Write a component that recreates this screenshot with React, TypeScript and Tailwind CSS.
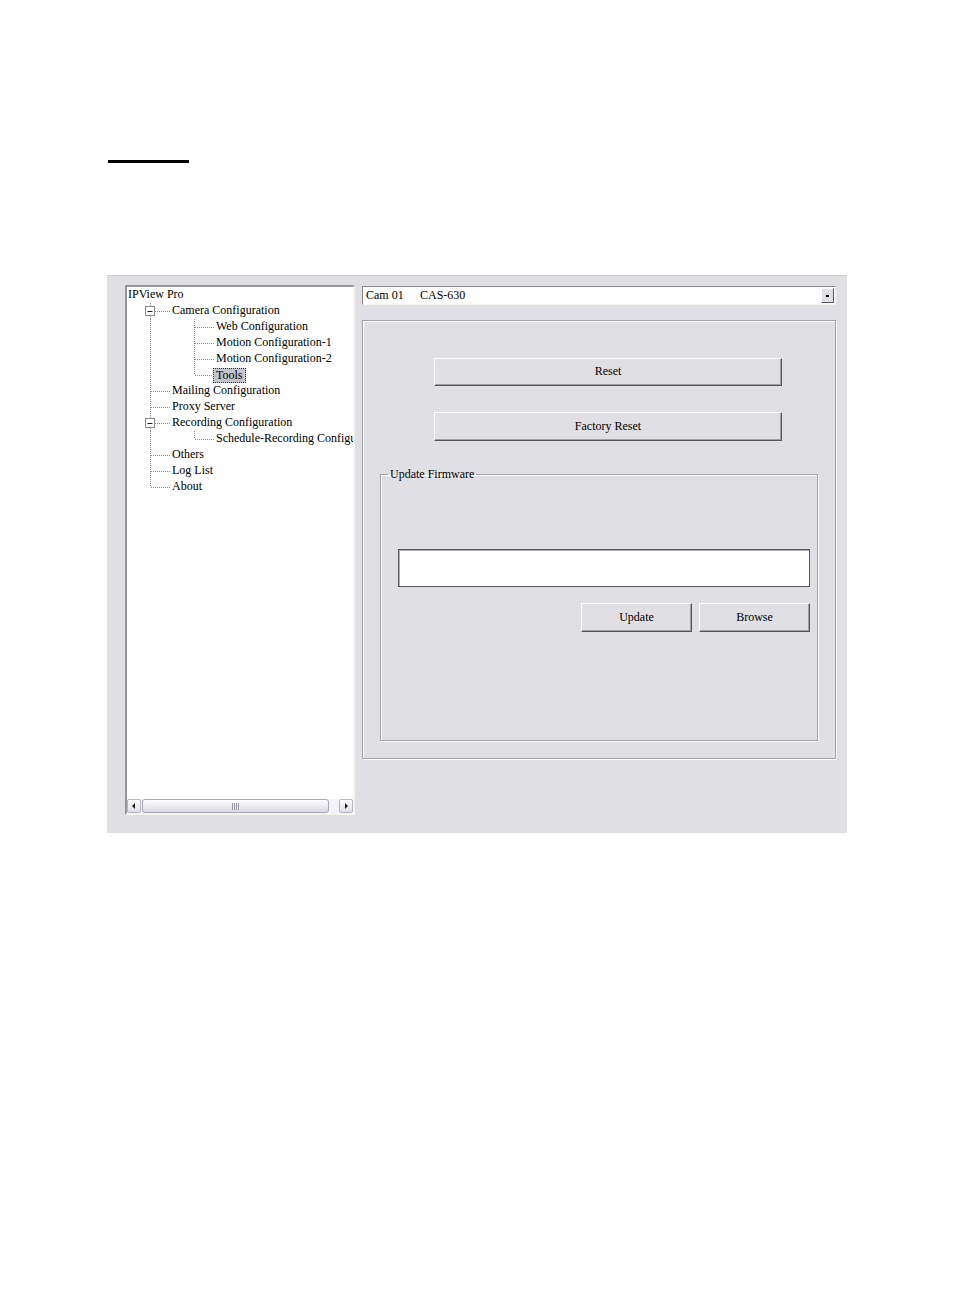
import React from "react";

type Kind =
  | "root"
  | "l1box"
  | "l1"
  | "l1last"
  | "l2"
  | "l2last";

const DOT = "#8c8c8c";

function VLine({ x, y1, y2 }: { x: number; y1: number; y2: number }) {
  return <line x1={x + 0.5} y1={y1} x2={x + 0.5} y2={y2} stroke={DOT} strokeDasharray="1 1" />;
}
function HLine({ x1, x2, y }: { x1: number; x2: number; y: number }) {
  return <line x1={x1} y1={y + 0.5} x2={x2} y2={y + 0.5} stroke={DOT} strokeDasharray="1 1" />;
}

function Prefix({ kind, l1Continues }: { kind: Kind; l1Continues: boolean }) {
  if (kind === "root") return <span className="inline-block w-[1px]" />;
  const isL2 = kind === "l2" || kind === "l2last";
  const width = isL2 ? 89 : 45;
  return (
    <svg width={width} height={16} className="shrink-0 block">
      {kind === "l1box" ? (
        <>
          <VLine x={23} y1={0} y2={3} />
          <VLine x={23} y1={13} y2={16} />
          <rect x={18.5} y={3.5} width={9} height={9} fill="#ffffff" stroke="#8c8c8c" />
          <line x1={20.5} y1={8.5} x2={25.5} y2={8.5} stroke="#1a1a1a" />
          <HLine x1={28} x2={44} y={8} />
        </>
      ) : kind === "l1" ? (
        <>
          <VLine x={23} y1={0} y2={16} />
          <HLine x1={24} x2={44} y={8} />
        </>
      ) : kind === "l1last" ? (
        <>
          <VLine x={23} y1={0} y2={8} />
          <HLine x1={24} x2={44} y={8} />
        </>
      ) : (
        <>
          {l1Continues && <VLine x={23} y1={0} y2={16} />}
          <VLine x={67} y1={0} y2={kind === "l2" ? 16 : 8} />
          <HLine x1={68} x2={88} y={8} />
        </>
      )}
    </svg>
  );
}

const rows: { text: string; kind: Kind; selected?: boolean }[] = [
  { text: "IPView Pro", kind: "root" },
  { text: "Camera Configuration", kind: "l1box" },
  { text: "Web Configuration", kind: "l2" },
  { text: "Motion Configuration-1", kind: "l2" },
  { text: "Motion Configuration-2", kind: "l2" },
  { text: "Tools", kind: "l2last", selected: true },
  { text: "Mailing Configuration", kind: "l1" },
  { text: "Proxy Server", kind: "l1" },
  { text: "Recording Configuration", kind: "l1box" },
  { text: "Schedule-Recording Configuration", kind: "l2last" },
  { text: "Others", kind: "l1" },
  { text: "Log List", kind: "l1" },
  { text: "About", kind: "l1last" },
];

function Arrow({ dir }: { dir: "left" | "right" }) {
  return (
    <svg width="8" height="8" viewBox="0 0 8 8">
      {dir === "left" ? (
        <polygon points="5,1 5,7 2,4" fill="#1a1a1a" />
      ) : (
        <polygon points="3,1 3,7 6,4" fill="#1a1a1a" />
      )}
    </svg>
  );
}

function WinButton({ label, className }: { label: string; className: string }) {
  return (
    <button
      className={
        "flex items-center justify-center pb-[2px] bg-[#e0dfe3] border border-t-white border-l-white border-r-[#555558] border-b-[#555558] shadow-[inset_-1px_-1px_0_#a0a0a4] text-[12px] leading-[16px] text-black " +
        className
      }
    >
      {label}
    </button>
  );
}

export default function App() {
  return (
    <div className="w-[954px] h-[1311px] bg-white overflow-hidden font-['Liberation_Serif',serif] text-black">
      <div className="ml-[108px] mt-[160px] w-[81px] h-[3px] bg-black" />

      <div className="ml-[107px] mt-[112px] w-[740px] h-[558px] bg-[#e0dfe3] border-t border-[#ccd2dc] flex pl-[18px] pt-[9px]">
        {/* Tree panel */}
        <div className="w-[230px] h-[530px] bg-white border-2 border-t-[#96969a] border-l-[#96969a] border-r-[#f4f3ee] border-b-[#f4f3ee] flex flex-col">
          <div className="flex-1 overflow-hidden">
            {rows.map((r, i) => {
              const l1Continues = i < 12;
              return (
                <div key={i} className="flex items-center h-[16px] whitespace-nowrap text-[12px] leading-[16px]">
                  {r.selected ? (
                    <>
                      <svg width={86} height={16} className="shrink-0 block">
                        <VLine x={23} y1={0} y2={16} />
                        <VLine x={67} y1={0} y2={8} />
                        <HLine x1={68} x2={86} y={8} />
                      </svg>
                      <span className="h-[15px] leading-[12px] px-[2px] bg-[#c4c4cc] border border-dotted border-[#333]">
                        {r.text}
                      </span>
                    </>
                  ) : (
                    <>
                      <Prefix kind={r.kind} l1Continues={l1Continues} />
                      <span className="-mt-[2px]">{r.text}</span>
                    </>
                  )}
                </div>
              );
            })}
          </div>
          {/* Horizontal scrollbar */}
          <div className="h-[14px] flex bg-[#f4f4f6]">
            <div className="w-[14px] h-[14px] flex items-center justify-center rounded-[2px] border border-[#b8b8c4] bg-gradient-to-b from-white to-[#dcdce4]">
              <Arrow dir="left" />
            </div>
            <div className="ml-[1px] w-[187px] h-[14px] rounded-[3px] border border-[#a8a8b6] bg-gradient-to-b from-white to-[#d8d8e0] flex items-center justify-center gap-[1px]">
              <span className="w-[1px] h-[7px] bg-[#9a9aa8]" />
              <span className="w-[1px] h-[7px] bg-[#9a9aa8]" />
              <span className="w-[1px] h-[7px] bg-[#9a9aa8]" />
              <span className="w-[1px] h-[7px] bg-[#9a9aa8]" />
            </div>
            <div className="flex-1" />
            <div className="w-[14px] h-[14px] flex items-center justify-center rounded-[2px] border border-[#b8b8c4] bg-gradient-to-b from-white to-[#dcdce4]">
              <Arrow dir="right" />
            </div>
          </div>
        </div>

        {/* Right column */}
        <div className="ml-[7px] w-[474px] flex flex-col">
          {/* Combo */}
          <div className="mt-[1px] h-[19px] bg-white border border-t-[#8a8a8e] border-l-[#8a8a8e] border-r-[#f4f3ee] border-b-[#f4f3ee] flex items-center text-[12px] leading-[16px]">
            <span className="pl-[3px] w-[57px] -mt-[2px]">Cam 01</span>
            <span className="flex-1 -mt-[2px]">CAS-630</span>
            <div className="w-[13px] h-[15px] mr-[1px] bg-[#e0dfe3] border border-t-white border-l-white border-r-[#555558] border-b-[#555558] flex items-center justify-center">
              <span className="w-[3px] h-[2px] bg-black" />
            </div>
          </div>

          {/* Panel */}
          <div className="mt-[15px] h-[439px] border border-[#a3a3a7] shadow-[1px_1px_0_#ffffff,inset_1px_1px_0_#ffffff] flex flex-col">
            <WinButton label="Reset" className="ml-[71px] mt-[37px] w-[348px] h-[28px]" />
            <WinButton label="Factory Reset" className="ml-[71px] mt-[26px] w-[348px] h-[29px]" />

            <fieldset className="ml-[17px] mt-[25px] w-[438px] h-[275px] border border-[#a3a3a7] shadow-[1px_1px_0_#ffffff,inset_1px_1px_0_#ffffff]">
              <legend className="ml-[7px] px-[2px] text-[12px] leading-[16px]">Update Firmware</legend>
              <div className="ml-[17px] mt-[67px] w-[412px] flex flex-col">
                <div className="h-[38px] bg-white border border-[#58585c] shadow-[inset_1px_1px_0_#b0b0b4]" />
                <div className="mt-[16px] flex justify-end gap-[7px]">
                  <WinButton label="Update" className="w-[111px] h-[29px]" />
                  <WinButton label="Browse" className="w-[111px] h-[29px]" />
                </div>
              </div>
            </fieldset>
          </div>
        </div>
      </div>
    </div>
  );
}
